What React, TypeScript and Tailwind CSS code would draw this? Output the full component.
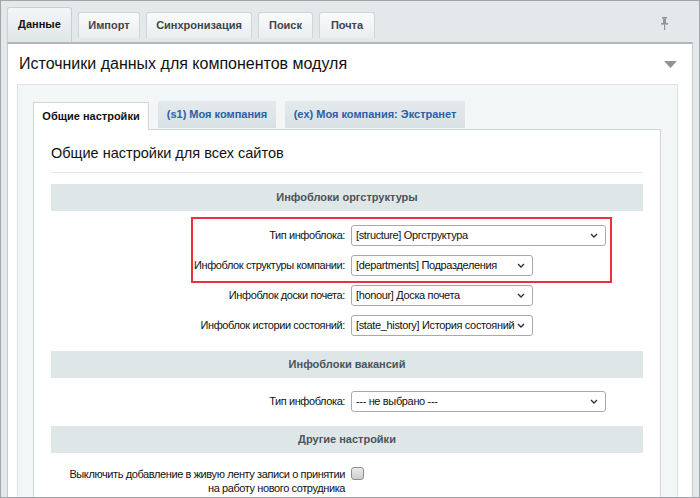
import React from 'react';

const Chevron = () => (
  <svg width="8" height="5" viewBox="0 0 8 5" className="shrink-0">
    <path d="M1 1l3 3 3-3" fill="none" stroke="#333" strokeWidth="1.4" />
  </svg>
);

const Select = ({ value, wide }: { value: string; wide?: boolean }) => (
  <div
    className={`ml-[6px] flex h-[21px] items-center justify-between rounded-[3px] border border-[#a9a9a9] bg-white pl-[4px] pr-[7px] text-[11px] tracking-[-0.35px] text-[#111] ${
      wide ? 'w-[255px]' : 'w-[182px]'
    }`}
  >
    <span className="whitespace-nowrap">{value}</span>
    <Chevron />
  </div>
);

const Row = ({ label, value, wide }: { label: string; value: string; wide?: boolean }) => (
  <div className="flex h-[30px] items-center">
    <div className="w-[294px] text-right text-[11px] tracking-[-0.4px] text-[#111]">{label}</div>
    <Select value={value} wide={wide} />
  </div>
);

const SectionBar = ({ title }: { title: string }) => (
  <div className="flex h-[27px] items-center justify-center bg-[#dfe6e8] text-[11px] font-bold text-[#4b5456]">
    {title}
  </div>
);

const topTabs = ['Импорт', 'Синхронизация', 'Поиск', 'Почта'];

export default function App() {
  return (
    <div className="h-[498px] w-[700px] overflow-hidden border border-[#a0a6a8] bg-[#e3e9eb] font-['Liberation_Sans',Arial,sans-serif]">
      {/* Top tabs */}
      <div className="flex h-[41px] items-start gap-[6px] pl-[6px] pt-[6px]">
        <div className="flex h-[35px] w-[65px] items-center justify-center rounded-t-[3px] border border-b-0 border-[#c6cfd1] bg-gradient-to-b from-[#f4f7f8] to-[#dfe6e8] pb-[2px] text-[11px] font-bold text-[#111]">
          Данные
        </div>
        {topTabs.map((t, i) => (
          <div
            key={t}
            className={`mt-[5px] flex h-[26px] items-center justify-center rounded-t-[3px] border border-b-0 border-[#ced6d8] bg-gradient-to-b from-[#fafbfb] to-[#e9eef0] text-[11px] font-bold text-[#3d4547] ${
              ['w-[62px]', 'w-[106px]', 'w-[55px]', 'w-[56px]'][i]
            }`}
          >
            {t}
          </div>
        ))}
        <div className="ml-auto mr-[30px] mt-[10px]">
          <svg width="9" height="13" viewBox="0 0 9 13">
            <rect x="2" y="0" width="5" height="1.5" fill="#8e9699" />
            <rect x="3" y="1.5" width="3" height="4.5" fill="#8e9699" />
            <rect x="1" y="6" width="7" height="1.6" fill="#8e9699" />
            <rect x="4" y="7.6" width="1.2" height="5.4" fill="#8e9699" />
          </svg>
        </div>
      </div>

      {/* Main panel */}
      <div className="mx-[6px] border border-t-2 border-[#c3cacc] border-t-[#b0b7b9] bg-white">
        <div className="flex h-[40px] items-center justify-between pl-[11px] pr-[15px]">
          <div className="text-[16px] text-[#111]">Источники данных для компонентов модуля</div>
          <svg width="13" height="7" viewBox="0 0 13 7">
            <path d="M0 0h13L6.5 7z" fill="#8c9497" />
          </svg>
        </div>

        <div className="ml-[9px] mr-[14px] border border-[#dce3e5] bg-[#f3f6f7] pl-[15px] pr-[16px] pt-[16px]">
          {/* Inner tabs */}
          <div className="flex items-end gap-[9px]">
            <div className="relative z-10 -mb-px flex h-[28px] w-[116px] items-center justify-center border border-b-0 border-[#cfd7d9] bg-white text-[11px] font-bold text-[#111]">
              Общие настройки
            </div>
            <div className="mb-px flex h-[27px] w-[118px] items-center justify-center bg-gradient-to-b from-[#e4eaec] to-[#d9e1e4] text-[11px] font-bold text-[#2c5ea6]">
              (s1) Моя компания
            </div>
            <div className="mb-px flex h-[27px] w-[180px] items-center justify-center bg-gradient-to-b from-[#e4eaec] to-[#d9e1e4] text-[11px] font-bold text-[#2c5ea6]">
              (ex) Моя компания: Экстранет
            </div>
          </div>

          {/* White content */}
          <div className="border border-[#cfd7d9] bg-white px-[17px] pt-[13px] pb-[40px]">
            <div className="border-b border-[#e0e6e8] pb-[9px] text-[14.5px] leading-[20px] text-[#111]">
              Общие настройки для всех сайтов
            </div>

            <div className="mt-[11px]">
              <SectionBar title="Инфоблоки оргструктуры" />
            </div>
            <div className="relative pt-[9px]">
              <div className="pointer-events-none absolute left-[140px] top-[6px] h-[66px] w-[421px] border-2 border-[#e8333b]" />
              <Row label="Тип инфоблока:" value="[structure] Оргструктура" wide />
              <Row label="Инфоблок структуры компании:" value="[departments] Подразделения" />
              <Row label="Инфоблок доски почета:" value="[honour] Доска почета" />
              <Row label="Инфоблок истории состояний:" value="[state_history] История состояний" />
            </div>

            <div className="mt-[11px]">
              <SectionBar title="Инфоблоки вакансий" />
            </div>
            <div className="pt-[8px]">
              <Row label="Тип инфоблока:" value="--- не выбрано ---" wide />
            </div>

            <div className="mt-[10px]">
              <SectionBar title="Другие настройки" />
            </div>
            <div className="flex items-start pt-[14px]">
              <div className="w-[294px] text-right text-[11px] leading-[14px] tracking-[-0.4px] text-[#111]">
                Выключить добавление в живую ленту записи о принятии
                <br />
                на работу нового сотрудника
              </div>
              <div className="ml-[6px] h-[13px] w-[13px] rounded-[3px] border border-[#8e8e8e] bg-gradient-to-b from-[#eaeaea] to-[#cdcdcd]" />
            </div>
          </div>
        </div>
      </div>
    </div>
  );
}
